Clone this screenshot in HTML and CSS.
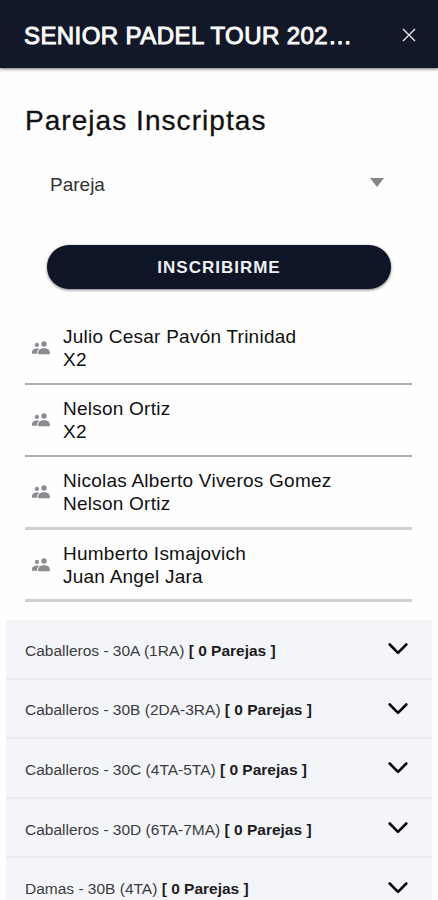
FILE: index.html
```html
<!DOCTYPE html>
<html lang="es">
<head>
<meta charset="utf-8">
<meta name="viewport" content="width=device-width, initial-scale=1">
<title>Senior Padel Tour</title>
<link rel="stylesheet" href="styles.css">
</head>
<body>
<svg class="sprite" aria-hidden="true">
  <symbol id="people" viewBox="0 0 18 14">
    <circle cx="4.9" cy="3.900" r="2.100"/>
    <circle cx="12" cy="3" r="2.700"/>
    <path d="M0 12.700v-1.600C0 8.900 2 7.600 4.900 7.500 5.800 7.500 6.500 7.600 7.100 7.900 5.700 8.800 5.200 9.800 5.200 11.100v1.600z"/>
    <path d="M6.200 13.300v-1.900C6.200 8.900 8.400 7.300 12 7.300s5.800 1.600 5.800 4.100v1.900z"/>
  </symbol>
  <symbol id="chevron" viewBox="0 0 20 12">
    <path d="M1.700 1.500 10 9.800 18.300 1.500" fill="none" stroke="#050505" stroke-width="2.600" stroke-linecap="round" stroke-linejoin="round"/>
  </symbol>
</svg>
<header class="toolbar">
  <h1 class="toolbar-title">SENIOR PADEL TOUR 202…</h1>
  <svg class="close" viewBox="0 0 14 14"><path d="M1 1 13 13M13 1 1 13"/></svg>
</header>
<main>
  <h2 class="heading">Parejas Inscriptas</h2>
  <div class="select"><span>Pareja</span><i class="caret"></i></div>
  <button class="enroll">INSCRIBIRME</button>
  <ul class="pairs">
    <li class="pair"><svg class="people"><use href="#people"/></svg><p>Julio Cesar Pavón Trinidad<br>X2</p></li>
    <li class="pair"><svg class="people"><use href="#people"/></svg><p>Nelson Ortiz<br>X2</p></li>
    <li class="pair pair-light"><svg class="people"><use href="#people"/></svg><p>Nicolas Alberto Viveros Gomez<br>Nelson Ortiz</p></li>
    <li class="pair pair-light"><svg class="people"><use href="#people"/></svg><p>Humberto Ismajovich<br>Juan Angel Jara</p></li>
  </ul>
  <div class="categories">
    <div class="category"><span>Caballeros - 30A (1RA) <b>[ 0 Parejas ]</b></span><svg class="chevron"><use href="#chevron"/></svg></div>
    <div class="category"><span>Caballeros - 30B (2DA-3RA) <b>[ 0 Parejas ]</b></span><svg class="chevron"><use href="#chevron"/></svg></div>
    <div class="category"><span>Caballeros - 30C (4TA-5TA) <b>[ 0 Parejas ]</b></span><svg class="chevron"><use href="#chevron"/></svg></div>
    <div class="category"><span>Caballeros - 30D (6TA-7MA) <b>[ 0 Parejas ]</b></span><svg class="chevron"><use href="#chevron"/></svg></div>
    <div class="category"><span>Damas - 30B (4TA) <b>[ 0 Parejas ]</b></span><svg class="chevron"><use href="#chevron"/></svg></div>
  </div>
</main>
</body>
</html>
```
FILE: styles.css
```css
* { box-sizing: border-box; margin: 0; padding: 0; }

body {
  height: 900px;
  overflow: hidden;
  background: #fefefe;
  color: #111;
  font-family: "Liberation Sans", Arial, sans-serif;
}

.sprite { display: none; }

.toolbar {
  display: flex;
  align-items: center;
  justify-content: space-between;
  height: 68px;
  padding: 2px 22px 0 24px;
  background: #121828;
  box-shadow: 0 1px 3px rgba(10, 14, 30, 0.6);
}

.toolbar-title {
  padding-top: 1px;
  color: #fafafa;
  font-size: 24px;
  font-weight: 400;
  line-height: 30px;
  letter-spacing: 0.42px;
  white-space: nowrap;
  -webkit-text-stroke: 1px #fafafa;
}

.close {
  width: 14px;
  height: 14px;
  fill: none;
  stroke: #e8e8ec;
  stroke-width: 1.4;
}

.heading {
  padding: 36px 25px 0;
  font-size: 28px;
  font-weight: 400;
  line-height: 34px;
  letter-spacing: 1.05px;
  -webkit-text-stroke: 0.3px #111;
}

.select {
  display: flex;
  align-items: center;
  justify-content: space-between;
  height: 24px;
  margin: 35px 54px 0 50px;
  color: #333;
  font-size: 19px;
}

.caret {
  margin-bottom: 5px;
  border: solid transparent;
  border-width: 9px 7px 0;
  border-top-color: #858585;
}

.enroll {
  display: block;
  width: 344px;
  height: 44px;
  margin: 48px 0 0 47px;
  padding-top: 1px;
  border: 0;
  border-radius: 22px;
  background: #0e1526;
  box-shadow: 0 1px 3px rgba(0, 0, 0, 0.55);
  color: #eef0f2;
  font: 700 17px "Liberation Sans", Arial, sans-serif;
  letter-spacing: 1px;
}

.pairs {
  margin: 24px 26px 0 25px;
  list-style: none;
}

.pair {
  display: flex;
  align-items: center;
  gap: 13px;
  height: 72px;
  padding: 0 0 0 7px;
  border-bottom: 2px solid #adadad;
  font-size: 19px;
  line-height: 23px;
  letter-spacing: 0.24px;
}

.pair-light { border-bottom: 3px solid #d0d0d0; }

.pair:nth-child(3) { height: 73px; }

.people {
  width: 18px;
  height: 14px;
  fill: #8b8b90;
}

.categories {
  margin: 18px 6px 0;
  background: #f4f5f9;
}

.category {
  display: flex;
  align-items: center;
  justify-content: space-between;
  height: 59.6px;
  padding: 4px 24px 0 19px;
  border-bottom: 2px solid #e9eaee;
  color: #3c3c3e;
  font-size: 15.5px;
  white-space: nowrap;
}

.category b { color: #1c1c1e; }

.chevron {
  width: 20px;
  height: 12px;
  margin-bottom: 3px;
}
```
